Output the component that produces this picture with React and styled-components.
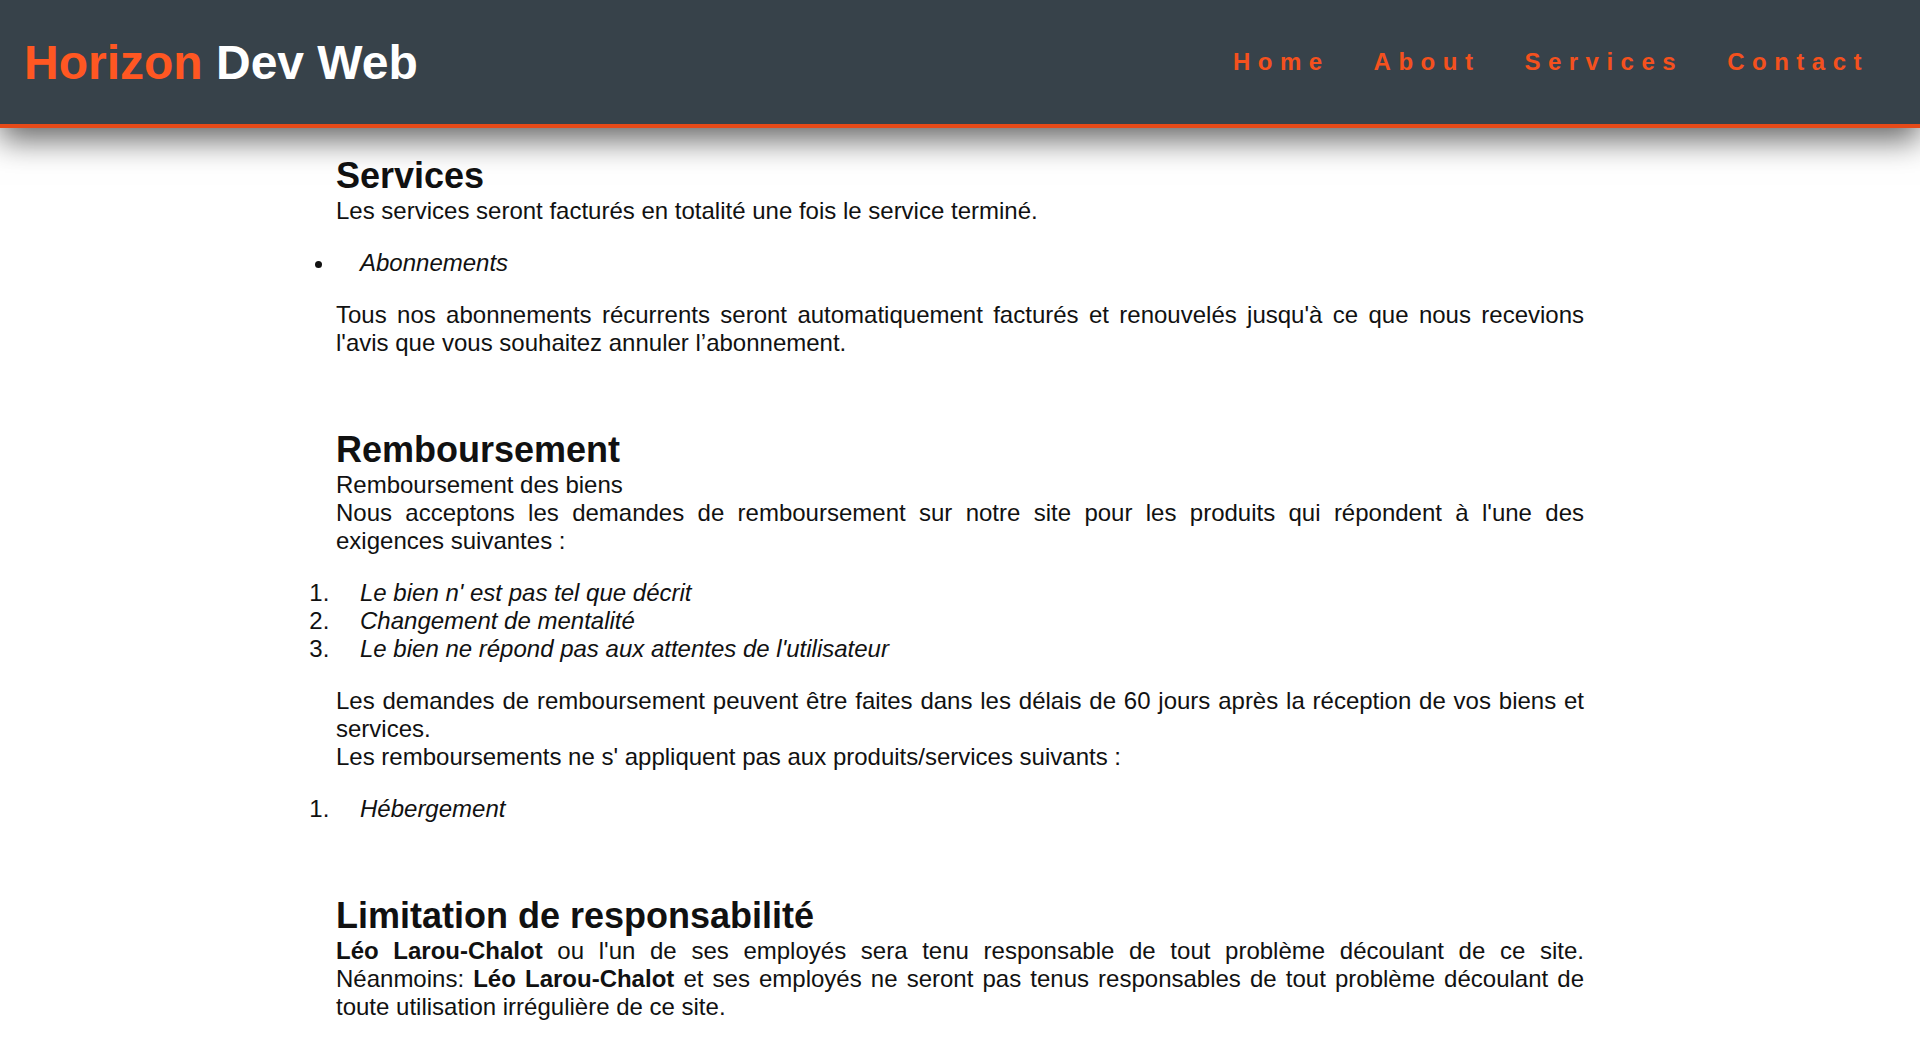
import styled, { createGlobalStyle } from "styled-components";

const GlobalStyle = createGlobalStyle`
  html, body {
    margin: 0;
    padding: 0;
    background: #ffffff;
    font-family: "Liberation Sans", Arial, sans-serif;
    color: #111111;
  }
`;

const Header = styled.header`
  position: relative;
  z-index: 2;
  height: 124px;
  display: flex;
  align-items: center;
  justify-content: space-between;
  padding: 0 51px 0 24px;
  background: #37424a;
  border-bottom: 4px solid #e64a19;
  box-shadow: 0 12px 30px rgba(0, 0, 0, 0.6);
`;

const Logo = styled.h1`
  margin: 0;
  font-size: 48px;
  font-weight: 700;
  color: #ffffff;
  white-space: nowrap;
`;

const Accent = styled.span`
  color: #ff5722;
`;

const Nav = styled.nav`
  display: flex;
  gap: 44px;
`;

const NavLink = styled.a`
  font-size: 24px;
  font-weight: 700;
  letter-spacing: 7.5px;
  color: #f4511e;
  text-decoration: none;
`;

const Main = styled.main`
  width: 65%;
  margin: 0 auto;
  padding: 26px 0 40px;
  display: flex;
  flex-direction: column;
  gap: 71px;
`;

const Section = styled.section`
  & > :last-child {
    margin-bottom: 0;
  }
`;

const Title = styled.h2`
  margin: 0;
  font-size: 36px;
  font-weight: 700;
  line-height: 43px;
`;

const Text = styled.p`
  margin: 0 0 24px;
  font-size: 24px;
  line-height: 28px;
  text-align: justify;
`;

const List = styled.ul`
  margin: 0 0 24px;
  padding: 0;
  list-style: ${(p) => (p.$ordered ? "decimal" : "disc")};
`;

const Item = styled.li`
  padding-left: 24px;
  font-size: 24px;
  line-height: 28px;
  font-style: italic;

  &::marker {
    font-style: normal;
  }
`;

const links = ["Home", "About", "Services", "Contact"];

export default function App() {
  return (
    <>
      <GlobalStyle />
      <Header>
        <Logo>
          <Accent>Horizon</Accent> Dev Web
        </Logo>
        <Nav>
          {links.map((l) => (
            <NavLink key={l} href="#">
              {l}
            </NavLink>
          ))}
        </Nav>
      </Header>
      <Main>
        <Section>
          <Title>Services</Title>
          <Text>Les services seront facturés en totalité une fois le service terminé.</Text>
          <List>
            <Item>Abonnements</Item>
          </List>
          <Text>
            Tous nos abonnements récurrents seront automatiquement facturés et renouvelés jusqu'à ce
            que nous recevions l'avis que vous souhaitez annuler l’abonnement.
          </Text>
        </Section>

        <Section>
          <Title>Remboursement</Title>
          <Text>
            Remboursement des biens
            <br />
            Nous acceptons les demandes de remboursement sur notre site pour les produits qui
            répondent à l'une des exigences suivantes :
          </Text>
          <List as="ol" $ordered>
            <Item>Le bien n' est pas tel que décrit</Item>
            <Item>Changement de mentalité</Item>
            <Item>Le bien ne répond pas aux attentes de l'utilisateur</Item>
          </List>
          <Text>
            Les demandes de remboursement peuvent être faites dans les délais de 60 jours après la
            réception de vos biens et services.
            <br />
            Les remboursements ne s' appliquent pas aux produits/services suivants :
          </Text>
          <List as="ol" $ordered>
            <Item>Hébergement</Item>
          </List>
        </Section>

        <Section>
          <Title>Limitation de responsabilité</Title>
          <Text>
            <strong>Léo Larou-Chalot</strong> ou l'un de ses employés sera tenu responsable de tout
            problème découlant de ce site. Néanmoins: <strong>Léo Larou-Chalot</strong> et ses
            employés ne seront pas tenus responsables de tout problème découlant de toute
            utilisation irrégulière de ce site.
          </Text>
        </Section>
      </Main>
    </>
  );
}
